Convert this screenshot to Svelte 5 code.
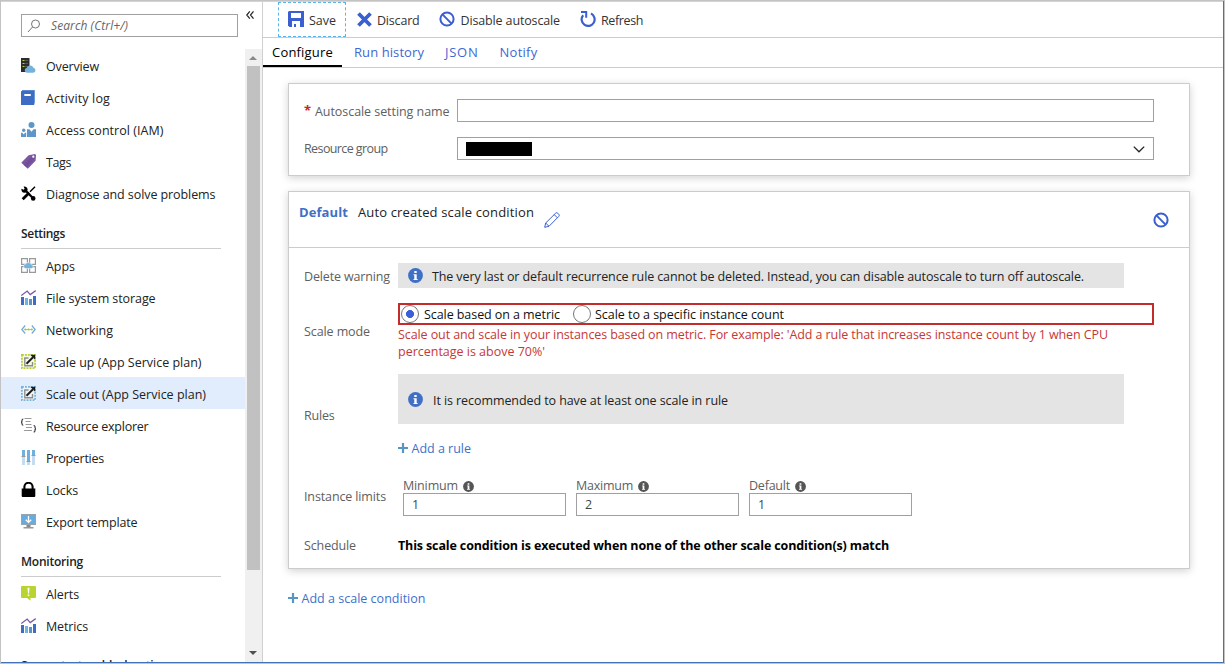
<script>
  // Spreads the letters of a label so that it takes the given width.
  function fit(node, width) {
    const natural = node.getBoundingClientRect().width;
    node.style.letterSpacing = (width - natural) / node.textContent.length + 'px';
  }

  const chart = `<path d="M0 7h3v8H0z M12 6h3v9h-3z" fill="#3d6cc4"/><path d="M4 8h3v7H4z" fill="#76b3dc"/><path d="M8 9h3v6H8z" fill="#5a93c8"/><path d="M.3 5.6 6.2 1l3 3.6L14.8.6" fill="none" stroke="#7b57a3" stroke-width="1.2"/>`;
  const scale = (dash) => `<path d="M0 0h15v15H0z" fill="#fff"/><rect x=".9" y=".9" width="13.2" height="13.2" fill="${dash}" fill-opacity=".12" stroke="${dash}" stroke-width="1.8" stroke-dasharray="2 1"/><path d="M7.5 4H3.800v7.800h7.700V8" fill="none" stroke="#8e8e8e" stroke-width="1.400"/><path d="M5.500 9.800 12 3.200" stroke="#1c1c1c" stroke-width="2"/><path d="M9.200.8h5v5z" fill="#1c1c1c"/>`;

  const icons = {
    overview: `<path d="M0 0h8.500v14H0z" fill="#2d2d2d"/><path d="M1.500 2.500h2M1.500 5.500h2M1.500 8.500h2" stroke="#b8d432"/><path d="M4 2.500h3M4 5.500h3M4 8.500h3" stroke="#555"/><path d="M5.800 14.800a2.400 2.400 0 0 1-.3-4.700A3.700 3.700 0 0 1 12.500 9.700a2.600 2.600 0 0 1-.2 5.100z" fill="#76b3dc"/>`,
    log: `<path d="M1 0h13v13.500H1z" fill="#7ba7e0"/><path d="M0 1.500 1.500.6h11.700V15H0z" fill="#3d6cc4"/><path d="M3.300 4h6.500v2H3.300z" fill="#fff"/>`,
    access: `<g fill="#5d97c9"><circle cx="10.500" cy="3.100" r="3"/><circle cx="2.700" cy="8.200" r="1.700"/><path d="M6 7.200h2.400l2.100 2.600 2.100-2.600H15V15H6zM0 10.800h1.400l1.300 1.600L4 10.800h1.200V15H0z"/></g>`,
    tags: `<path d="M.3 8.700 7.600 1.300 14 0l1 1-.4 5.700-7.800 8z" fill="#7b57a3"/><path d="m2.500 11 7.700-8 3 1.600-7.500 9z" fill="#68448f" opacity=".45"/><circle cx="12.300" cy="2.700" r="1.100" fill="#fff"/>`,
    tools: `<path d="M4 4 12.800 13" stroke="#000" stroke-width="2.300"/><path d="M2.600.6 3.600 2.800 2.700 3.700.5 2.800A3.100 3.100 0 1 0 2.600.6z"/><path d="M14 .7 9 5.700" stroke="#000" stroke-width="1.500"/><path d="M8.200 6.800 1.700 13.300" stroke="#000" stroke-width="2.800"/><circle cx="12.200" cy="12.400" r="2.300"/>`,
    apps: `<path d="M.6.600h5.800v5.800H.6zM8.600.600h5.800v5.800H8.600zM.6 8.600h5.800v5.800H.6zM8.600 8.600h5.800v5.800H8.600z" fill="none" stroke="#999" stroke-width="1.200"/><path d="M4.400 10.600a2.300 2.300 0 0 1 .1-4.500 3.400 3.400 0 0 1 6.100.7 2 2 0 0 1 .3 3.800z" fill="#76b3dc" stroke="#fff" stroke-width=".5"/>`,
    chart,
    network: `<g fill="none"><path d="M4.200 3.500.8 7.500l3.400 4M10.800 3.500l3.400 4-3.400 4" stroke="#76a9d8" stroke-width="1.300"/><path d="M3.500 7.500h8" stroke="#a4c639" stroke-width=".8"/></g><g fill="#a4c639"><circle cx="4.300" cy="7.500" r="1.100"/><circle cx="7.500" cy="7.500" r="1.100"/><circle cx="10.700" cy="7.500" r="1.100"/></g>`,
    scaleup: scale('#b5d334'),
    scaleout: scale('#76b3dc'),
    explorer: `<g fill="none"><path d="M2.300 1Q1 1 1 2.300v1L0 4.200l1 .9v1Q1 7.300 2.300 7.300M12.600 7.500Q14 7.500 14 8.700v1.100l1 .9-1 .9v1.100q0 1.300-1.400 1.300" stroke="#333" stroke-width="1.100"/><path d="M3.500.5h7M4.500 3.500h5M4.500 6.500h6M5 9.500h6M3 12.500h8" stroke="#999"/></g>`,
    properties: `<g fill="#c4dcf0"><path d="M1 0h3v15H1zM6 0h3v15H6zM11 0h3v15h-3z"/></g><path d="M1 0h3v6H1zM6 0h3v11H6zM11 0h3v5h-3z" fill="#6fb0de"/><path d="M.5 6.500h4M5.500 11.500h4M10.500 5.500h4" stroke="#999"/>`,
    lock: `<path d="M.7 6.500h13.600V14q0 1-1 1H1.700q-1 0-1-1z"/><path d="M3.400 7V4.800a4.100 4 0 0 1 8.200 0V7" fill="none" stroke="#000" stroke-width="2.100"/>`,
    exporticon: `<path d="M0 0h15v11H0z" fill="#a0a4a6"/><path d="M.8.800h13.400v9.400H.8z" fill="#68abdc"/><path d="M5.500 11h4v2h-4z" fill="#888"/><path d="M2.500 13h10v1.500h-10z" fill="#999"/><path d="M7.500 2v6M4.800 5.700 7.500 8.400l2.700-2.700" fill="none" stroke="#fff" stroke-width="1.300"/>`,
    alerts: `<path d="M1 0h13q1 0 1 1v10q0 1-1 1h-4.500v2.700L6 12H1q-1 0-1-1V1q0-1 1-1z" fill="#b8d432"/><path d="M6.500 1.800h2L8 7.500H7zM6.700 8.500h1.600v1.600H6.700z" fill="#fff"/>`
  };

  const groups = [
    { items: [['overview', 'Overview', 53], ['log', 'Activity log', 64], ['access', 'Access control (IAM)', 117.5], ['tags', 'Tags', 25], ['tools', 'Diagnose and solve problems', 169.5]] },
    { title: 'Settings', width: 44, items: [['apps', 'Apps', 29], ['chart', 'File system storage', 109.5], ['network', 'Networking', 67], ['scaleup', 'Scale up (App Service plan)', 155.5], ['scaleout', 'Scale out (App Service plan)', 160], ['explorer', 'Resource explorer', 102.5], ['properties', 'Properties', 58], ['lock', 'Locks', 32], ['exporticon', 'Export template', 91.5]] },
    { title: 'Monitoring', width: 62, items: [['alerts', 'Alerts', 33], ['chart', 'Metrics', 42]] },
    { title: 'Support + troubleshooting', width: 146, items: [] }
  ];
  const tabs = [['Configure', 61], ['Run history', 70], ['JSON', 33.5], ['Notify', 38]];
  const limits = [['Minimum', 55, 1], ['Maximum', 57, 2], ['Default', 41, 1]];
</script>

{#snippet info(size, color)}
  <svg width={size} height={size} viewBox="0 0 15 15"><circle cx="7.5" cy="7.5" r="7.4" fill={color} /><path d="M6.300 3h2.400v2H6.300zM5.500 6.200h3.200V11h.9v1H5.500v-1h.8V7.200h-.8z" fill="#fff" /></svg>
{/snippet}
{#snippet ban()}
  <svg width="16" height="16" viewBox="0 0 16 16" fill="none" stroke="#3a5fd0" stroke-width="2"><circle cx="8" cy="8" r="6.600" /><path d="m3.400 3.400 9.200 9.200" /></svg>
{/snippet}
{#snippet plus()}
  <svg width="10" height="10" viewBox="0 0 10 10" stroke="#5795c4" stroke-width="2.200"><path d="M5 0v10M0 5h10" /></svg>
{/snippet}

<div class="frame">
  <aside>
    <div class="top">
      <div class="search">
        <svg width="14" height="14" viewBox="0 0 14 14" fill="none" stroke="#777"><circle cx="8.500" cy="5" r="4" /><path d="M5.500 8 1 13" /></svg>
        <span use:fit={77}>Search (Ctrl+/)</span>
      </div>
      <svg class="collapse" width="8" height="8" viewBox="0 0 8 8" fill="none" stroke="#222" stroke-width="1.200"><path d="M3.800.4.800 4l3 3.600M7.500.4l-3 3.600 3 3.600" /></svg>
    </div>
    <div class="scroller">
      <nav>
        {#each groups as group}
          {#if group.title}<h3><span use:fit={group.width}>{group.title}</span></h3>{/if}
          {#each group.items as [icon, label, width]}
            <div class="item" class:active={icon === 'scaleout'}>
              <svg width="15" height="15" viewBox="0 0 15 15">{@html icons[icon]}</svg>
              <span use:fit={width}>{label}</span>
            </div>
          {/each}
        {/each}
      </nav>
      <div class="bar">
        <svg width="8" height="4" viewBox="0 0 8 4"><path d="M0 4 4 0l4 4z" fill="#8a8a8a" /></svg>
        <div class="thumb"></div>
        <svg class="down" width="8" height="4" viewBox="0 0 8 4"><path d="m0 0 4 4 4-4z" fill="#505050" /></svg>
      </div>
    </div>
  </aside>

  <main>
    <div class="toolbar">
      <div class="cmd save">
        <svg width="16" height="16" viewBox="0 0 16 16"><path d="M1 0H16v16H1.500L0 14.500V1z" fill="#3a5fd0" /><path d="M3 2h10v5H3zM4 10h8v6H8v-3H6v3H4z" fill="#fff" /></svg>
        <span use:fit={27}>Save</span>
      </div>
      <div class="cmd discard">
        <svg width="15" height="15" viewBox="0 0 15 15" stroke="#3a5fd0" stroke-width="3.800"><path d="m1.500 1.500 12 12M13.500 1.500l-12 12" /></svg>
        <span use:fit={42.5}>Discard</span>
      </div>
      <div class="cmd disable">{@render ban()}<span use:fit={99.5}>Disable autoscale</span></div>
      <div class="cmd refresh">
        <svg width="16" height="16" viewBox="0 0 16 16" fill="none" stroke="#3a5fd0" stroke-width="2.200"><path d="M11 2.600A6.500 6.500 0 1 1 3.200 4.200" /><path d="M1 1.100h5.200v5.600" stroke-width="2" /></svg>
        <span use:fit={42}>Refresh</span>
      </div>
    </div>
    <div class="tabs">
      {#each tabs as [label, width], i}
        <div class="tab" class:current={i === 0}><span use:fit={width}>{label}</span></div>
      {/each}
    </div>

    <div class="content">
      <section class="card names">
        <div class="field">
          <div class="label"><b>*</b><span use:fit={134.5}>Autoscale setting name</span></div>
          <div class="input"></div>
        </div>
        <div class="field">
          <div class="label"><span use:fit={83.500}>Resource group</span></div>
          <div class="input select">
            <i class="value"></i>
            <svg width="12" height="7" viewBox="0 0 12 7" fill="none" stroke="#222" stroke-width="1.300"><path d="m.8.600 5.200 5.200L11.200.6" /></svg>
          </div>
        </div>
      </section>

      <section class="card">
        <header>
          <strong><span use:fit={49}>Default</span></strong>
          <span class="name"><span use:fit={176}>Auto created scale condition</span></span>
          <svg class="pencil" width="16" height="16" viewBox="0 0 16 16" fill="none" stroke="#3a5fd0"><path d="m.7 15.300 1-4.300L11.500 1.300a1.700 1.700 0 0 1 2.400 0l.8.800a1.700 1.700 0 0 1 0 2.400L5 14.300zM1.700 11 5 14.300M10.200 2.600l3.200 3.200" /></svg>
          <span class="off">{@render ban()}</span>
        </header>
        <div class="row warning">
          <div class="label"><span use:fit={86}>Delete warning</span></div>
          <div class="notice">{@render info(15, '#3f6fc6')}<span use:fit={652}>The very last or default recurrence rule cannot be deleted. Instead, you can disable autoscale to turn off autoscale.</span></div>
        </div>
        <div class="row mode">
          <div class="label"><span use:fit={66}>Scale mode</span></div>
          <div class="grow">
            <div class="radios">
              <i class="radio on"></i><span class="r1"><span use:fit={136}>Scale based on a metric</span></span>
              <i class="radio"></i><span class="r2"><span use:fit={189}>Scale to a specific instance count</span></span>
            </div>
            <div class="error"><span use:fit={710}>Scale out and scale in your instances based on metric. For example: 'Add a rule that increases instance count by 1 when CPU</span></div>
            <div class="error"><span use:fit={147}>percentage is above 70%'</span></div>
          </div>
        </div>
        <div class="row rules">
          <div class="label"><span use:fit={30.500}>Rules</span></div>
          <div class="grow">
            <div class="notice tall">{@render info(15, '#3f6fc6')}<span use:fit={295}>It is recommended to have at least one scale in rule</span></div>
            <div class="add">{@render plus()}<span use:fit={59.500}>Add a rule</span></div>
          </div>
        </div>
        <div class="row limits">
          <div class="label"><span use:fit={82}>Instance limits</span></div>
          <div class="boxes">
            {#each limits as [label, width, value]}
              <div class="limit">
                <div class="cap"><span use:fit={width}>{label}</span>{@render info(11, '#555')}</div>
                <div class="input">{value}</div>
              </div>
            {/each}
          </div>
        </div>
        <div class="row schedule">
          <div class="label"><span use:fit={52}>Schedule</span></div>
          <strong><span use:fit={491}>This scale condition is executed when none of the other scale condition(s) match</span></strong>
        </div>
      </section>
      <div class="add last">{@render plus()}<span use:fit={124}>Add a scale condition</span></div>
    </div>
  </main>
</div>

<style>
  .frame, .frame * { box-sizing: border-box; }
  .frame {
    display: flex;
    width: 1225px;
    height: 664px;
    padding: 2px 2px 2px 1px;
    overflow: hidden;
    background: #fff;
    box-shadow: inset 0 1px #c3c3c3, inset 1px 0 #c3c3c3, inset -1px -1px #c3c3c3, inset -2px -2px #4472b8, inset 0 2px #d4d4d4;
    font: 12.5px/17px "Open Sans", "Noto Sans", sans-serif;
    color: #222;
  }
  span { white-space: nowrap; }
  svg { display: block; flex: none; }
  aside { width: 262px; height: 660px; border-right: 1px solid #d0d0d0; flex: none; display: flex; flex-direction: column; }
  .top { display: flex; height: 47px; padding: 12px 0 0 20px; flex: none; }
  .search { display: flex; align-items: center; width: 217px; height: 23px; border: 1px solid #a0a0a0; padding-left: 5px; gap: 10px; font-size: 12px; font-style: italic; color: #666; }
  .collapse { margin: -3px 0 0 8px; }
  .scroller { display: flex; flex: 1; min-height: 0; }
  nav { width: 244px; overflow: hidden; }
  .item { display: flex; align-items: center; height: 32px; padding: 0 0 0 20px; gap: 10px; }
  .item svg { margin-top: 1px; }
  .item span { margin-top: 2px; }
  .active { background: #e1edfc; }
  h3 { margin: 0 24px 0 20px; height: 40px; padding-top: 16px; border-bottom: 1px solid #ccc; font-size: 12px; line-height: 18px; font-weight: 600; }
  .bar { width: 17px; background: #f0f0f0; display: flex; flex-direction: column; align-items: center; padding: 7px 2px 7px 0; }
  .thumb { width: 13px; height: 504px; margin-top: 6px; margin-left: 1px; background: #c1c1c1; }
  .down { margin-top: auto; }

  main { flex: 1; min-width: 0; }
  .toolbar { display: flex; height: 36px; border-bottom: 1px solid #ccc; padding-left: 15px; color: #333; }
  .cmd { display: flex; align-items: center; gap: 5px; height: 35px; }
  .cmd svg { margin-top: -1px; }
  .cmd span { margin-top: 2px; }
  .save { width: 68px; padding-left: 9px; border: 1px dashed #5bb4ea; }
  .discard { margin-left: 11px; }
  .disable { margin-left: 19px; }
  .disable span { margin-left: 1px; }
  .refresh { margin-left: 20px; }
  .tabs { display: flex; height: 30px; border-bottom: 1px solid #ccc; gap: 21px; color: #3f67d2; font-size: 13px; }
  .tab { padding-top: 6px; height: 29px; }
  .tab.current { width: 79px; padding-left: 9px; margin-right: -9px; border-bottom: 2px solid #000; color: #000; }

  .content { padding: 15px 33px 0 25px; }
  .card { border: 1px solid #ccc; background: #fff; box-shadow: 0 2px 8px rgba(0, 0, 0, .18); margin-bottom: 15px; }
  .names { height: 93px; padding: 15px 35px 0 15px; }
  .field { display: flex; align-items: center; height: 23px; margin-bottom: 15px; }
  .label { display: flex; color: #606060; flex: none; }
  .field .label { width: 153px; }
  .field + .field .label { margin-top: -2px; }
  .label b { color: #c62828; width: 11px; font-size: 13px; }
  .input { height: 23px; border: 1px solid #a0a0a0; background: #fff; padding: 2px 8px; flex: 1; }
  .select { display: flex; align-items: center; justify-content: space-between; padding: 0 8px 0 8px; }
  .select svg { margin-top: 2px; }
  .value { width: 66px; height: 14px; background: #000; }
  header { height: 56px; border-bottom: 1px solid #ccc; display: flex; padding: 12px 20px 0 10px; font-size: 13px; }
  header strong { color: #3f70c6; width: 59px; }
  .pencil { margin: 8px 0 0 10px; }
  .off { margin: 8px 0 0 auto; }

  .row { display: flex; align-items: center; padding-left: 15px; }
  .row .label { width: 94px; margin-top: -2px; }
  .warning .label { margin-top: 0; }
  .grow { flex: 1; }
  .notice { display: flex; align-items: center; width: 726px; height: 25px; padding-left: 10px; gap: 9px; background: #e4e4e4; color: #222; }
  .notice svg { margin-top: -1px; }
  .notice span, .label span { margin-top: 1px; }
  .warning { margin-top: 15px; height: 25px; }
  .mode { margin-top: 15px; height: 58px; padding-right: 35px; }
  .radios { display: flex; align-items: center; height: 22px; border: 2px solid #c42b2b; padding-left: 1px; color: #111; }
  .radio { width: 18px; height: 18px; border: 1px solid #777; border-radius: 50%; display: block; flex: none; }
  .on { background: radial-gradient(circle, #3a5fd8 3.700px, transparent 4.300px); }
  .r1 { width: 154px; padding-left: 5px; }
  .r2 { padding-left: 4px; }
  .radios + .error { margin-top: 1px; }
  .error + .error { margin-bottom: 1px; }
  .error { color: #c83737; }
  .rules { margin-top: 13px; height: 83px; }
  .tall { height: 50px; gap: 10px; }
  .tall svg { margin-top: 1px; }
  .tall span { margin-top: 3px; }
  .add { display: flex; align-items: center; gap: 4px; height: 17px; margin-top: 16px; color: #4070cc; }
  .add svg { margin-top: -1px; }
  .add span { margin-left: -.5px; }
  .limits { margin-top: 20px; height: 39px; }
  .boxes { display: flex; gap: 10px; padding-left: 5px; }
  .limit { width: 163px; }
  .cap { display: flex; align-items: center; gap: 5px; height: 16px; color: #606060; }
  .cap svg { margin-top: 3px; }
  .limit .input { color: #444; }
  .schedule { margin-top: 20px; height: 19px; margin-bottom: 13px; }
  .schedule strong { color: #000; }
  .last { margin-top: 21px; }
</style>
